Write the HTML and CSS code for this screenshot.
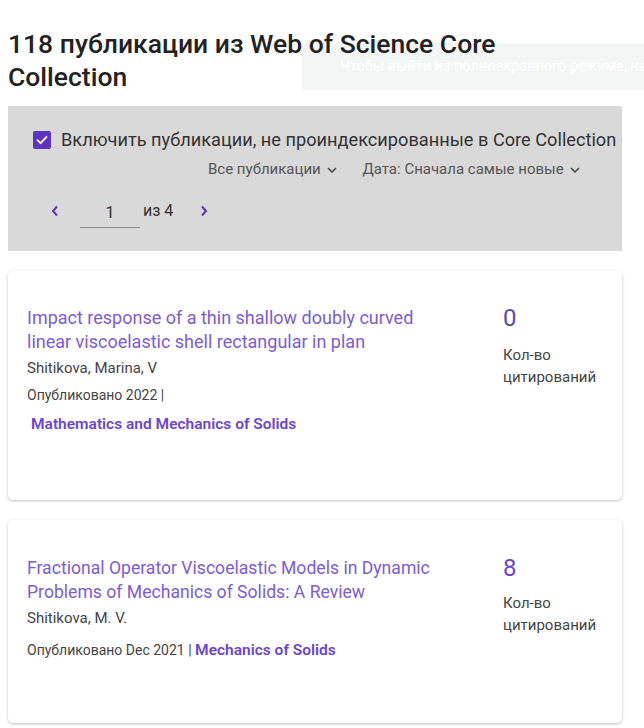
FILE: index.html
```html
<!DOCTYPE html>
<html lang="ru">
<head>
  <meta charset="UTF-8" />
  <title>Публикации</title>
  <link rel="stylesheet" href="styles.css">
</head>
<body>
  <h1 class="page-title">118 публикации из Web of Science Core Collection</h1>

  <div class="fs-toast">Чтобы выйти из полноэкранного режима, нажмите Esc</div>

  <div class="filters">
    <label class="include">
      <span class="check">
        <svg width="12" height="10" viewBox="0 0 12 10"><path d="M1.5 5.2 L4.6 8.2 L10.5 1.8" fill="none" stroke="#fff" stroke-width="1.8" stroke-linecap="round" stroke-linejoin="round"/></svg>
      </span>
      <span class="include-text">Включить публикации, не проиндексированные в Core Collection (40)</span>
    </label>

    <div class="sorts">
      <span class="sort">Все публикации <svg width="10" height="6" viewBox="0 0 10 6"><path d="M1 1 L5 5 L9 1" fill="none" stroke="#444" stroke-width="1.5"/></svg></span>
      <span class="sort">Дата: Сначала самые новые <svg width="10" height="6" viewBox="0 0 10 6"><path d="M1 1 L5 5 L9 1" fill="none" stroke="#444" stroke-width="1.5"/></svg></span>
    </div>

    <div class="pager">
      <svg class="arrow" width="8" height="12" viewBox="0 0 8 12"><path d="M6 1.5 L2 6 L6 10.5" fill="none" stroke="#5e33bf" stroke-width="2"/></svg>
      <span class="page-input">1</span>
      <span class="page-of">из 4</span>
      <svg class="arrow" width="8" height="12" viewBox="0 0 8 12"><path d="M2 1.5 L6 6 L2 10.5" fill="none" stroke="#5e33bf" stroke-width="2"/></svg>
    </div>
  </div>

  <div class="card card-first">
    <div class="card-main">
      <a class="pub-title" href="#">Impact response of a thin shallow doubly curved linear viscoelastic shell rectangular in plan</a>
      <div class="author">Shitikova, Marina, V</div>
      <div class="published">Опубликовано 2022 |</div>
      <a class="journal journal-block" href="#">Mathematics and Mechanics of Solids</a>
    </div>
    <div class="cites">
      <div class="cite-num">0</div>
      <div class="cite-label">Кол-во<br>цитирований</div>
    </div>
  </div>

  <div class="card card-second">
    <div class="card-main">
      <a class="pub-title" href="#">Fractional Operator Viscoelastic Models in Dynamic Problems of Mechanics of Solids: A Review</a>
      <div class="author">Shitikova, M. V.</div>
      <div class="published published-wide">Опубликовано Dec 2021 | <a class="journal" href="#">Mechanics of Solids</a></div>
    </div>
    <div class="cites">
      <div class="cite-num cite-num-strong">8</div>
      <div class="cite-label cite-label-second">Кол-во<br>цитирований</div>
    </div>
  </div>
</body>
</html>
```

FILE: styles.css
```css
* {
  box-sizing: border-box;
  margin: 0;
  padding: 0;
}

body {
  font-family: 'Roboto', 'Liberation Sans', sans-serif;
  background: #ffffff;
  color: #333;
  padding: 0 22px 0 8px;
  overflow: hidden;
  height: 728px;
}

.page-title {
  font-size: 26.5px;
  font-weight: 500;
  line-height: 33px;
  color: #222;
  padding-top: 27px;
  width: 500px;
}

/* chrome fullscreen notice, sits behind the heading */
.fs-toast {
  position: absolute;
  z-index: -1;
  left: 302px;
  top: 43px;
  width: 342px;
  height: 47px;
  background: #f4f6f5;
  color: #ffffff;
  font-size: 14.5px;
  padding: 15px 0 0 38px;
  white-space: nowrap;
  overflow: hidden;
}

.filters {
  margin-top: 13px;
  background: #d9d9d9;
  height: 145px;
  padding: 23px 0 0 25px;
  overflow: hidden;
}

.include {
  display: flex;
  align-items: center;
  gap: 10px;
  white-space: nowrap;
}

.check {
  width: 18px;
  height: 18px;
  border-radius: 2px;
  background: #5e33bf;
  display: flex;
  align-items: center;
  justify-content: center;
  flex-shrink: 0;
}

.include-text {
  font-size: 18.2px;
  color: #333;
}

.sorts {
  display: flex;
  gap: 25px;
  padding-left: 175px;
  margin-top: 10px;
  font-size: 15px;
  color: #555;
}

.sort svg {
  margin-left: 3px;
  vertical-align: middle;
}

.pager {
  display: flex;
  align-items: center;
  margin-top: 19px;
  padding-left: 18px;
  font-size: 16px;
  color: #333;
}

.page-input {
  width: 60px;
  margin-left: 21px;
  text-align: center;
  border-bottom: 1.5px solid #8a8a8a;
  padding: 2px 0 5px;
  position: relative;
  top: 4px;
}

.page-of {
  margin: 0 27px 0 3px;
}

.card {
  display: flex;
  background: #fff;
  border-radius: 5px;
  box-shadow: 0 1px 3px rgba(0, 0, 0, 0.25);
  padding: 36px 0 0 19px;
}

.card-first {
  margin-top: 19px;
  height: 230px;
}

.card-second {
  margin-top: 20px;
  height: 203px;
}

.card-main {
  width: 476px;
}

.pub-title {
  display: block;
  font-size: 18px;
  line-height: 24px;
  color: #7b5cd6;
  text-decoration: none;
  width: 410px;
}

.card-second .pub-title {
  width: 420px;
  font-size: 17.6px;
}

.author {
  font-size: 15px;
  line-height: 22px;
  color: #444;
  margin-top: 3px;
}

.published {
  font-size: 14px;
  line-height: 20px;
  color: #444;
  margin-top: 6px;
}

.published-wide {
  margin-top: 11px;
}

.journal {
  font-size: 15.5px;
  font-weight: 600;
  color: #6b45d0;
  text-decoration: none;
}

.journal-block {
  display: block;
  margin: 10px 0 0 4px;
}

.cite-num {
  font-size: 24px;
  line-height: 24px;
  color: #5b4bb0;
}

.cite-num-strong {
  color: #6a42c9;
}

.cite-label {
  font-size: 15px;
  line-height: 22px;
  color: #444;
  margin-top: 14px;
}

.cite-label-second {
  margin-top: 12px;
}
```
